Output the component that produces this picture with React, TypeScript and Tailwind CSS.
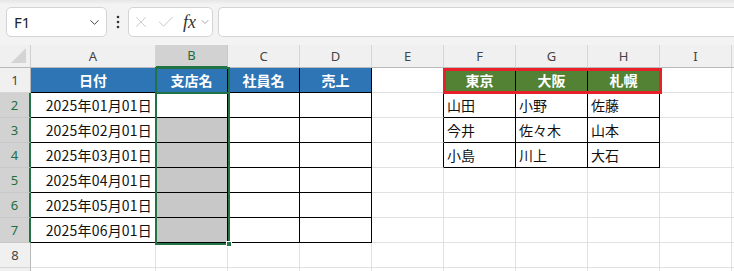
import { ChevronDown, X, Check } from "lucide-react";

const COLS = ["A", "B", "C", "D", "E", "F", "G", "H", "I", "J"];
const WIDTHS = [125, 72, 72, 72, 72, 72, 72, 72, 72, 72];
const ROWS = [1, 2, 3, 4, 5, 6, 7, 8, 9];

const DATA: Record<string, string> = {
  A1: "日付",
  B1: "支店名",
  C1: "社員名",
  D1: "売上",
  F1: "東京",
  G1: "大阪",
  H1: "札幌",
  A2: "2025年01月01日",
  A3: "2025年02月01日",
  A4: "2025年03月01日",
  A5: "2025年04月01日",
  A6: "2025年05月01日",
  A7: "2025年06月01日",
  F2: "山田",
  G2: "小野",
  H2: "佐藤",
  F3: "今井",
  G3: "佐々木",
  H3: "山本",
  F4: "小島",
  G4: "川上",
  H4: "大石",
};

const inTable = (r: number, c: number) =>
  (r >= 1 && r <= 7 && c >= 0 && c <= 3) || (r >= 1 && r <= 4 && c >= 5 && c <= 7);

const Cell = ({ r, c }: { r: number; c: number }) => {
  const key = COLS[c] + r;
  const text = DATA[key];
  const right = inTable(r, c) || inTable(r, c + 1);
  const bottom = inTable(r, c) || inTable(r + 1, c);
  let fill = "bg-white text-[#111]";
  let align = "justify-start pl-[3px]";
  if (r === 1 && c <= 3) {
    fill = "bg-[#2e75b6] text-white font-bold";
    align = "justify-center";
  } else if (r === 1 && c >= 5 && c <= 7) {
    fill = "bg-[#548235] text-white font-bold";
    align = "justify-center";
  } else if (c === 1 && r >= 3 && r <= 7) {
    fill = "bg-[#c8c8c8]";
  } else if (c === 0) {
    align = "justify-end pr-[3px] tracking-[0.2px]";
  }
  return (
    <div
      className={`flex items-center border-r border-b whitespace-nowrap overflow-hidden ${fill} ${align} ${
        right ? "border-r-black" : "border-r-[#e1e1e1]"
      } ${bottom ? "border-b-black" : "border-b-[#e1e1e1]"}`}
    >
      {text}
    </div>
  );
};

export default function App() {
  return (
    <div className="w-[734px] h-[271px] overflow-hidden bg-[#f3f3f3] flex flex-col font-['Noto_Sans_CJK_JP',sans-serif]">
      {/* formula bar */}
      <div className="h-[45px] shrink-0 bg-gradient-to-b from-[#e6e6e6] via-[#f3f3f3] via-[10%] to-[#f3f3f3] flex items-start pt-[7px] pl-[6px]">
        <div className="w-[101px] h-[30px] bg-white border border-[#d4d4d4] rounded-[5px] flex items-center justify-between pl-[7px] pr-[4px]">
          <span className="font-['Noto_Sans',sans-serif] text-[15px] text-[#222]">F1</span>
          <ChevronDown size={15} strokeWidth={1.6} className="text-[#444]" />
        </div>
        <div className="w-[21px] h-[30px] flex items-center justify-center">
          <svg width="4" height="14" viewBox="0 0 4 14">
            <circle cx="2" cy="2" r="1.3" fill="#333" />
            <circle cx="2" cy="7" r="1.3" fill="#333" />
            <circle cx="2" cy="12" r="1.3" fill="#333" />
          </svg>
        </div>
        <div className="w-[85px] h-[30px] bg-white border border-[#d4d4d4] rounded-[5px] flex items-center pl-[3px] gap-[3px]">
          <X size={18} strokeWidth={1.1} className="text-[#c2c2c2]" />
          <Check size={20} strokeWidth={1.1} className="text-[#c2c2c2] ml-[3px]" />
          <span className="font-['Liberation_Serif',serif] italic text-[18px] text-[#333] ml-[4px] leading-none">
            fx
          </span>
          <ChevronDown size={12} strokeWidth={1.5} className="text-[#888]" />
        </div>
        <div className="ml-[5px] flex-1 h-[30px] bg-white border border-[#d4d4d4] border-r-0 rounded-l-[5px]" />
      </div>

      {/* sheet */}
      <div className="relative flex-1">
        <div
          className="grid text-[14px] leading-none"
          style={{ gridTemplateColumns: `31px ${WIDTHS.map((w) => w + "px").join(" ")}`, gridTemplateRows: "23px repeat(9, 25px)" }}
        >
          {/* corner */}
          <div className="bg-[#f0f0f0] border-r border-b border-r-[#d0d0d0] border-b-[#b9b9b9] flex items-end justify-end pr-[4px] pb-[4px]">
            <svg width="15" height="15" viewBox="0 0 15 15">
              <polygon points="15,0 15,15 0,15" fill="#d4d4d4" />
            </svg>
          </div>
          {COLS.map((col, c) =>
            c === 1 ? (
              <div
                key={col}
                className="bg-[#d2d2d2] border-r border-r-[#c8c8c8] border-b-2 border-b-[#217346] flex items-center justify-center text-[13px] text-[#1e6e41] font-['Noto_Sans',sans-serif]"
              >
                {col}
              </div>
            ) : (
              <div
                key={col}
                className="bg-[#f0f0f0] border-r border-b border-r-[#d6d6d6] border-b-[#b9b9b9] flex items-center justify-center text-[13px] text-[#444] font-['Noto_Sans',sans-serif]"
              >
                {c < 9 ? col : ""}
              </div>
            )
          )}
          {ROWS.map((r) => [
            r >= 2 && r <= 7 ? (
              <div
                key={"h" + r}
                className="bg-[#d2d2d2] border-r-2 border-b border-r-[#217346] border-b-[#c8c8c8] flex items-center justify-center text-[13px] text-[#1e6e41] font-['Noto_Sans',sans-serif]"
              >
                {r}
              </div>
            ) : (
              <div
                key={"h" + r}
                className="bg-[#f0f0f0] border-r border-b border-r-[#b9b9b9] border-b-[#d6d6d6] flex items-center justify-center text-[13px] text-[#444] font-['Noto_Sans',sans-serif]"
              >
                {r < 9 ? r : ""}
              </div>
            ),
            ...COLS.map((_, c) => <Cell key={COLS[c] + r} r={r} c={c} />),
          ])}
        </div>

        {/* selection B1:B7 */}
        <div className="absolute left-[155px] top-[22px] w-[75px] h-[178px] border-2 border-[#217346] pointer-events-none" />
        <div className="absolute left-[155px] top-[47px] w-[75px] h-[2px] bg-[#217346]" />
        <div className="absolute left-[226px] top-[196px] w-[6px] h-[6px] bg-[#217346] border border-white" />

        {/* red frame F1:H1 */}
        <div className="absolute left-[443px] top-[23px] w-[219px] h-[26px] border-[3px] border-[#e8202a] pointer-events-none" />
      </div>
    </div>
  );
}
